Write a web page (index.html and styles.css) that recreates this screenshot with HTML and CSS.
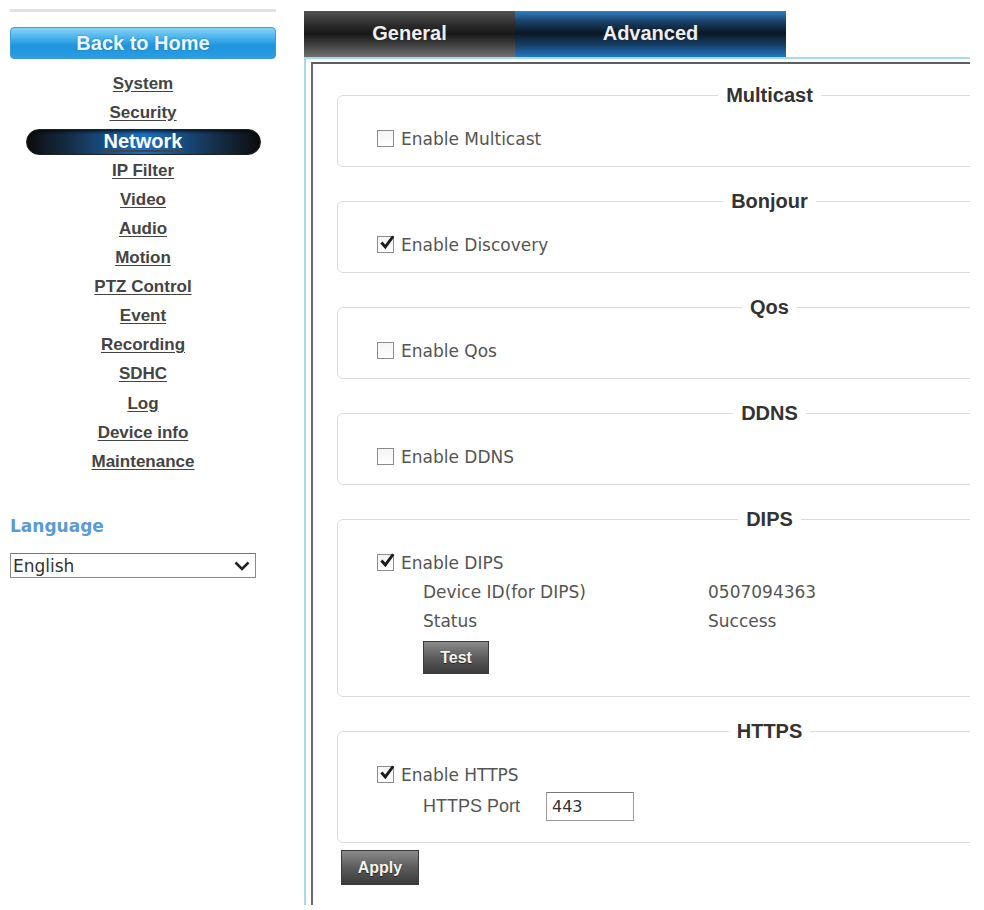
FILE: index.html
```html
<!DOCTYPE html>
<html>
<head>
<meta charset="utf-8">
<link rel="stylesheet" href="styles.css">
</head>
<body>
<div class="page">
  <aside class="sidebar">
    <div class="topline"></div>
    <a class="home-btn">Back to Home</a>
    <nav class="nav">
      <a class="nav-item">System</a>
      <a class="nav-item">Security</a>
      <div class="nav-item"><span class="pill">Network</span></div>
      <a class="nav-item">IP Filter</a>
      <a class="nav-item">Video</a>
      <a class="nav-item">Audio</a>
      <a class="nav-item">Motion</a>
      <a class="nav-item">PTZ Control</a>
      <a class="nav-item">Event</a>
      <a class="nav-item">Recording</a>
      <a class="nav-item">SDHC</a>
      <a class="nav-item">Log</a>
      <a class="nav-item">Device info</a>
      <a class="nav-item">Maintenance</a>
    </nav>
    <div class="lang-label">Language</div>
    <div class="select">
      <span>English</span>
      <svg class="chev" width="16" height="10" viewBox="0 0 16 10"><path d="M1.5 1.5 L8 8 L14.5 1.5" fill="none" stroke="#222" stroke-width="2.6"/></svg>
    </div>
  </aside>

  <main class="main">
    <div class="tabs">
      <div class="tab tab-general">General</div>
      <div class="tab tab-adv">Advanced</div>
    </div>
    <div class="panel">
      <div class="inner">
        <fieldset class="group">
          <legend>Multicast</legend>
          <div class="row"><span class="cb"></span><span class="lbl">Enable Multicast</span></div>
        </fieldset>
        <fieldset class="group">
          <legend>Bonjour</legend>
          <div class="row"><span class="cb on"><svg viewBox="0 0 16 16"><path d="M3 7.5 L6.5 11.5 L13.5 2" fill="none" stroke="#1c1c1c" stroke-width="2.6"/></svg></span><span class="lbl">Enable Discovery</span></div>
        </fieldset>
        <fieldset class="group">
          <legend>Qos</legend>
          <div class="row"><span class="cb"></span><span class="lbl">Enable Qos</span></div>
        </fieldset>
        <fieldset class="group">
          <legend>DDNS</legend>
          <div class="row"><span class="cb"></span><span class="lbl">Enable DDNS</span></div>
        </fieldset>
        <fieldset class="group group-dips">
          <legend>DIPS</legend>
          <div class="row"><span class="cb on"><svg viewBox="0 0 16 16"><path d="M3 7.5 L6.5 11.5 L13.5 2" fill="none" stroke="#1c1c1c" stroke-width="2.6"/></svg></span><span class="lbl">Enable DIPS</span></div>
          <div class="row sub"><span class="key">Device ID(for DIPS)</span><span class="val">0507094363</span></div>
          <div class="row sub"><span class="key">Status</span><span class="val">Success</span></div>
          <div class="sub-btn"><button class="btn btn-test">Test</button></div>
        </fieldset>
        <fieldset class="group group-https">
          <legend>HTTPS</legend>
          <div class="row"><span class="cb on"><svg viewBox="0 0 16 16"><path d="M3 7.5 L6.5 11.5 L13.5 2" fill="none" stroke="#1c1c1c" stroke-width="2.6"/></svg></span><span class="lbl">Enable HTTPS</span></div>
          <div class="port-row"><span class="port-lbl">HTTPS Port</span><span class="input">443</span></div>
        </fieldset>
        <button class="btn btn-apply">Apply</button>
      </div>
    </div>
  </main>
</div>
</body>
</html>
```

FILE: styles.css
```css
* { box-sizing: border-box; }
html, body { margin: 0; padding: 0; background: #fff; }
body { font-family: "DejaVu Sans", Verdana, sans-serif; color: #555; overflow: hidden; }

.page { display: flex; align-items: flex-start; width: 984px; height: 910px; }

/* Sidebar */
.sidebar { width: 266px; margin-left: 10px; padding-top: 9px; display: flex; flex-direction: column; }
.topline { height: 3px; background: #e2e2e2; }
.home-btn {
  margin-top: 15px; height: 32px; border-radius: 4px;
  display: flex; align-items: center; justify-content: center;
  font-family: "Liberation Sans", Arial, sans-serif; font-weight: bold; font-size: 20px;
  color: #eaf6fd;
  background: linear-gradient(#8ad3f6 0%, #3aaceb 40%, #1f93dc 60%, #2a9fe3 100%);
  border: 1px solid #3d9ad2;
  text-shadow: 0 0 2px rgba(20,90,150,0.5);
}
.nav { margin-top: 10px; display: flex; flex-direction: column; }
.nav-item {
  height: 29.1px; display: flex; align-items: center; justify-content: center;
  font-family: "Liberation Sans", Arial, sans-serif; font-weight: bold; font-size: 17px;
  color: #444; text-decoration: underline; text-underline-offset: 2px;
}
.pill {
  width: 235px; height: 26px; border-radius: 13px;
  display: flex; align-items: center; justify-content: center;
  color: #fff; font-size: 20px; text-decoration: none;
  background: linear-gradient(90deg, #0c0c0c 0%, #16314d 20%, #1a6fc4 50%, #16314d 80%, #0c0c0c 100%);
  border: 1px solid #222;
  box-shadow: inset 0 2px 3px rgba(0,0,0,0.6);
}
.lang-label {
  margin-top: 38px; line-height: 24px; height: 24px;
  font-family: "DejaVu Sans", Verdana, sans-serif; font-weight: bold; font-size: 17px; color: #5b9ad3;
}
.select {
  margin-top: 15px; width: 246px; height: 25px;
  border: 1px solid #8a8a8a; border-top-color: #777;
  display: flex; align-items: center; justify-content: space-between;
  padding: 0 5px 0 2px;
  font-size: 17px; color: #333;
}

/* Main */
.main { margin-left: 28px; width: 666px; height: 910px; overflow: hidden; padding-top: 11px; }
.tabs { display: flex; height: 46px; }
.tab {
  height: 46px; display: flex; align-items: center; justify-content: center; padding-bottom: 1px;
  font-family: "Liberation Sans", Arial, sans-serif; font-weight: bold; font-size: 20px; color: #eee;
}
.tab-general { width: 211px; background: linear-gradient(#525252 0%, #2c2c2c 30%, #181818 50%, #3e3e3e 72%, #707070 100%); }
.tab-adv { width: 271px; background: linear-gradient(#2d80c6 0%, #1b436a 22%, #0b1724 48%, #163f66 74%, #2279c2 100%); }

.panel {
  border-top: 2px solid #a7d8ee; border-left: 2px solid #a7d8ee;
  padding: 3px 0 0 5px; height: 848px;
}
.inner {
  border-top: 2px solid #5e5e5e; border-left: 2px solid #6c6c6c;
  height: 100%; padding: 19px 0 0 24px;
}

.group {
  width: 826px; margin: 0 0 22px 0; padding: 17px 0 13px 39px;
  border: 1px solid #dcdcdc; border-radius: 6px;
}
.group legend {
  margin: 0 auto; padding: 0 8px; line-height: 24px;
  font-family: "Liberation Sans", Arial, sans-serif; font-weight: bold; font-size: 20px; color: #333;
}
.row { height: 29px; display: flex; align-items: center; font-size: 17px; color: #555; }
.cb {
  width: 17px; height: 17px; border: 1px solid #8c8c8c; background: linear-gradient(#f4f4f4, #fff);
  margin-right: 7px; position: relative; flex: none;
}
.cb svg { position: absolute; left: 0; top: -3px; width: 18px; height: 18px; }
.row.sub { padding-left: 46px; }
.row.sub + .row.sub { height: 30px; }
.key { width: 285px; }
.sub-btn { padding-left: 46px; margin-top: 5px; margin-bottom: 9px; display: flex; }

.btn {
  display: flex; align-items: center; justify-content: center;
  font-family: "Liberation Sans", Arial, sans-serif; font-weight: bold; font-size: 16px; color: #f2f2f2;
  background: linear-gradient(#8b8b8b 0%, #5c5c5c 50%, #3b3b3b 100%);
  border: 1px solid #3a3a3a; padding: 0; margin: 0;
  text-shadow: 0 1px 1px rgba(0,0,0,0.6);
}
.btn-test { width: 66px; height: 33px; }
.btn-apply { width: 78px; height: 35px; margin-left: 4px; margin-top: -15px; }

.port-row { display: flex; align-items: center; height: 29px; margin-top: 3px; margin-bottom: 8px; padding-left: 46px; }
.port-lbl { font-family: "Liberation Sans", Arial, sans-serif; font-size: 18px; color: #555; width: 123px; }
.input {
  width: 88px; height: 29px; border: 1px solid #9a9a9a; border-top-color: #777;
  display: flex; align-items: center; padding-left: 5px; font-size: 16px; color: #333;
}
```
